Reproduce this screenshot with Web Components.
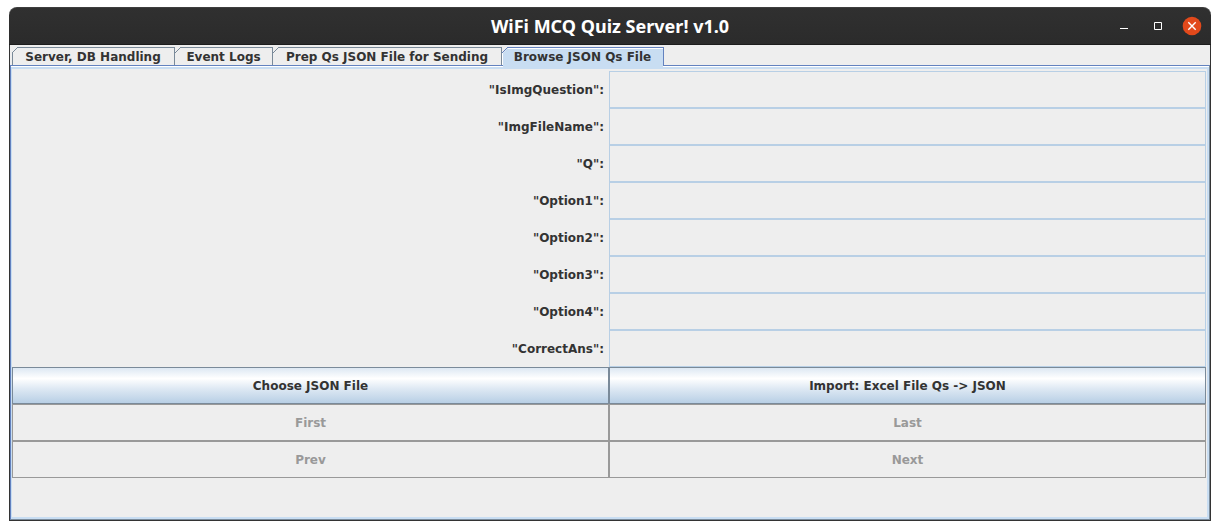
<!DOCTYPE html>
<html lang="en">
<head>
<meta charset="utf-8">
<title>WiFi MCQ Quiz Server! v1.0</title>
<style>
  body {
    margin: 0;
    padding: 7px 9px 9px;
    box-sizing: border-box;
    min-height: 100vh;
    display: flex;
    flex-direction: column;
    background: #fff;
    color: #333;
    font: bold 12px/16px "DejaVu Sans", sans-serif;
  }
</style>
</head>
<body>

<app-window>
  <span slot="title">WiFi MCQ Quiz Server! v1.0</span>
  <tab-pane>
    <tab-item slot="tabs" style="--w:163px" first>Server, DB Handling</tab-item>
    <tab-item slot="tabs" style="--w:98px">Event Logs</tab-item>
    <tab-item slot="tabs" style="--w:229px">Prep Qs JSON File for Sending</tab-item>
    <tab-item slot="tabs" style="--w:162px" selected>Browse JSON Qs File</tab-item>

    <field-row label='"IsImgQuestion":'></field-row>
    <field-row label='"ImgFileName":'></field-row>
    <field-row label='"Q":'></field-row>
    <field-row label='"Option1":'></field-row>
    <field-row label='"Option2":'></field-row>
    <field-row label='"Option3":'></field-row>
    <field-row label='"Option4":'></field-row>
    <field-row label='"CorrectAns":'></field-row>
    <button-row>
      <push-button>Choose JSON File</push-button>
      <push-button>Import: Excel File Qs -&gt; JSON</push-button>
    </button-row>
    <button-row>
      <push-button disabled>First</push-button>
      <push-button disabled>Last</push-button>
    </button-row>
    <button-row>
      <push-button disabled>Prev</push-button>
      <push-button disabled>Next</push-button>
    </button-row>
  </tab-pane>
</app-window>

<template id="app-window">
  <style>
    :host { display: flex; flex-direction: column; flex: 1; }
    header {
      display: grid;
      grid-template-columns: 1fr auto 1fr;
      align-items: center;
      height: 38px;
      box-sizing: border-box;
      border-top: 1px solid #3e3e3e;
      border-bottom: 1px solid #1c1c1c;
      border-radius: 8px 8px 0 0;
      background: linear-gradient(#303030, #2b2b2b);
      color: #fff;
    }
    h1 { grid-column: 2; margin: 0; font: bold 18px/24px "Noto Sans", sans-serif; }
    .controls { display: flex; justify-content: flex-end; gap: 10px; padding-right: 7px; }
    button { width: 24px; height: 24px; padding: 0; border: 0; background: none; }
    svg { display: block; }
    .body {
      flex: 1;
      display: flex;
      flex-direction: column;
      border: 1px solid #333;
      border-top: 0;
      background: #eee;
    }
  </style>
  <header>
    <h1><slot name="title"></slot></h1>
    <div class="controls">
      <button type="button" aria-label="Minimize"><svg width="24" height="24"><path d="M8 14.5h8" stroke="#fff"/></svg></button>
      <button type="button" aria-label="Maximize"><svg width="24" height="24"><path d="M8.500 8.500h7v7h-7z" fill="none" stroke="#fff"/></svg></button>
      <button type="button" aria-label="Close"><svg width="24" height="24"><circle cx="12" cy="12" r="9.300" fill="#e2491b"/><path d="M8.300 8.300l7.400 7.400M15.700 8.300l-7.400 7.400" stroke="#fff" stroke-width="1.400"/></svg></button>
    </div>
  </header>
  <div class="body"><slot></slot></div>
</template>

<template id="tab-pane">
  <style>
    :host { flex: 1; display: flex; flex-direction: column; }
    .tabs { display: flex; padding: 2px 2px 0; }
    .panel {
      flex: 1;
      display: flex;
      border: 1px solid #6382bf;
      border-right-color: #7a8a99;
      border-bottom-color: #7a8a99;
      padding-top: 1px;
      background: #fff;
    }
    .content {
      flex: 1;
      border: 2px solid #c8ddf2;
      border-left-width: 1px;
      padding: 2px 1px 0 0;
      background: #eee;
    }
  </style>
  <div class="tabs" role="tablist"><slot name="tabs"></slot></div>
  <div class="panel" role="tabpanel"><div class="content"><slot></slot></div></div>
</template>

<template id="tab-item">
  <style>
    :host { display: block; width: var(--w); height: 18px; --line: #7a8a99; --fill: #eee; --shine: #eee; }
    :host([selected]) { --line: #6382bf; --fill: #c8ddf2; --shine: #fff; position: relative; }
    button {
      display: grid;
      grid-template-columns: 6px 1fr;
      width: 100%;
      height: 100%;
      padding: 0;
      border: 0;
      background: none;
      color: inherit;
      font: inherit;
      text-align: center;
    }
    svg { display: block; width: 6px; height: 18px; }
    .corner { stroke: var(--line); fill: none; }
    .edge { stroke: var(--shine); }
    .area { fill: var(--fill); }
    :host([first]) .edge { stroke: var(--line); }
    .face {
      height: 18px;
      box-sizing: border-box;
      border: solid var(--line);
      border-width: 1px 1px 0 0;
      box-shadow: inset 0 1px var(--shine);
      background: var(--fill);
      padding: 1px 6px 0 0;
      white-space: nowrap;
    }
    /* The chosen tab runs on over the panel's top edge. */
    :host([selected])::after {
      content: "";
      position: absolute;
      left: 1px;
      right: 1px;
      top: 18px;
      height: 2px;
      background: var(--fill);
    }
  </style>
  <button type="button" role="tab">
    <svg viewBox="0 0 6 18" aria-hidden="true">
      <path class="area" d="M1 6L6 1V18H1z"/>
      <path class="edge" d="M.5 6V18"/>
      <path class="corner" d="M0 6L6 0"/>
    </svg>
    <span class="face"><slot></slot></span>
  </button>
</template>

<template id="field-row">
  <style>
    :host { display: grid; grid-template-columns: 1fr 1fr; height: 37px; }
    label { align-self: center; text-align: right; padding-right: 5px; }
    input {
      min-width: 0;
      box-sizing: border-box;
      border: 1px solid #b8cfe5;
      border-radius: 0;
      padding: 0 4px;
      background: #eee;
      color: inherit;
      font: inherit;
      outline: none;
    }
  </style>
  <label for="field"></label>
  <input id="field" type="text" readonly>
</template>

<template id="button-row">
  <style>
    :host { display: grid; grid-template-columns: 1fr 1fr; height: 37px; }
  </style>
  <slot></slot>
</template>

<template id="push-button">
  <style>
    :host { display: grid; }
    button {
      padding: 0;
      border: 1px solid #7a8a99;
      border-radius: 0;
      background: linear-gradient(#dde8f3, #fff 30%, #dde8f3 60%, #b8cfe5);
      color: #333;
      font: inherit;
    }
    button:disabled { border-color: #999; background: #eee; color: #999; }
  </style>
  <button type="button"><slot></slot></button>
</template>

<script>
  class TemplateElement extends HTMLElement {
    constructor() {
      super();
      const template = document.getElementById(this.localName);
      this.attachShadow({ mode: "open" }).append(template.content.cloneNode(true));
    }
  }

  customElements.define("app-window", class extends TemplateElement {});
  customElements.define("tab-pane", class extends TemplateElement {});
  customElements.define("button-row", class extends TemplateElement {});

  customElements.define("tab-item", class extends TemplateElement {
    connectedCallback() {
      this.shadowRoot.querySelector("button")
        .setAttribute("aria-selected", String(this.hasAttribute("selected")));
    }
  });

  customElements.define("field-row", class extends TemplateElement {
    connectedCallback() {
      this.shadowRoot.querySelector("label").textContent = this.getAttribute("label");
    }
  });

  customElements.define("push-button", class extends TemplateElement {
    connectedCallback() {
      this.shadowRoot.querySelector("button").disabled = this.hasAttribute("disabled");
    }
  });
</script>
</body>
</html>
